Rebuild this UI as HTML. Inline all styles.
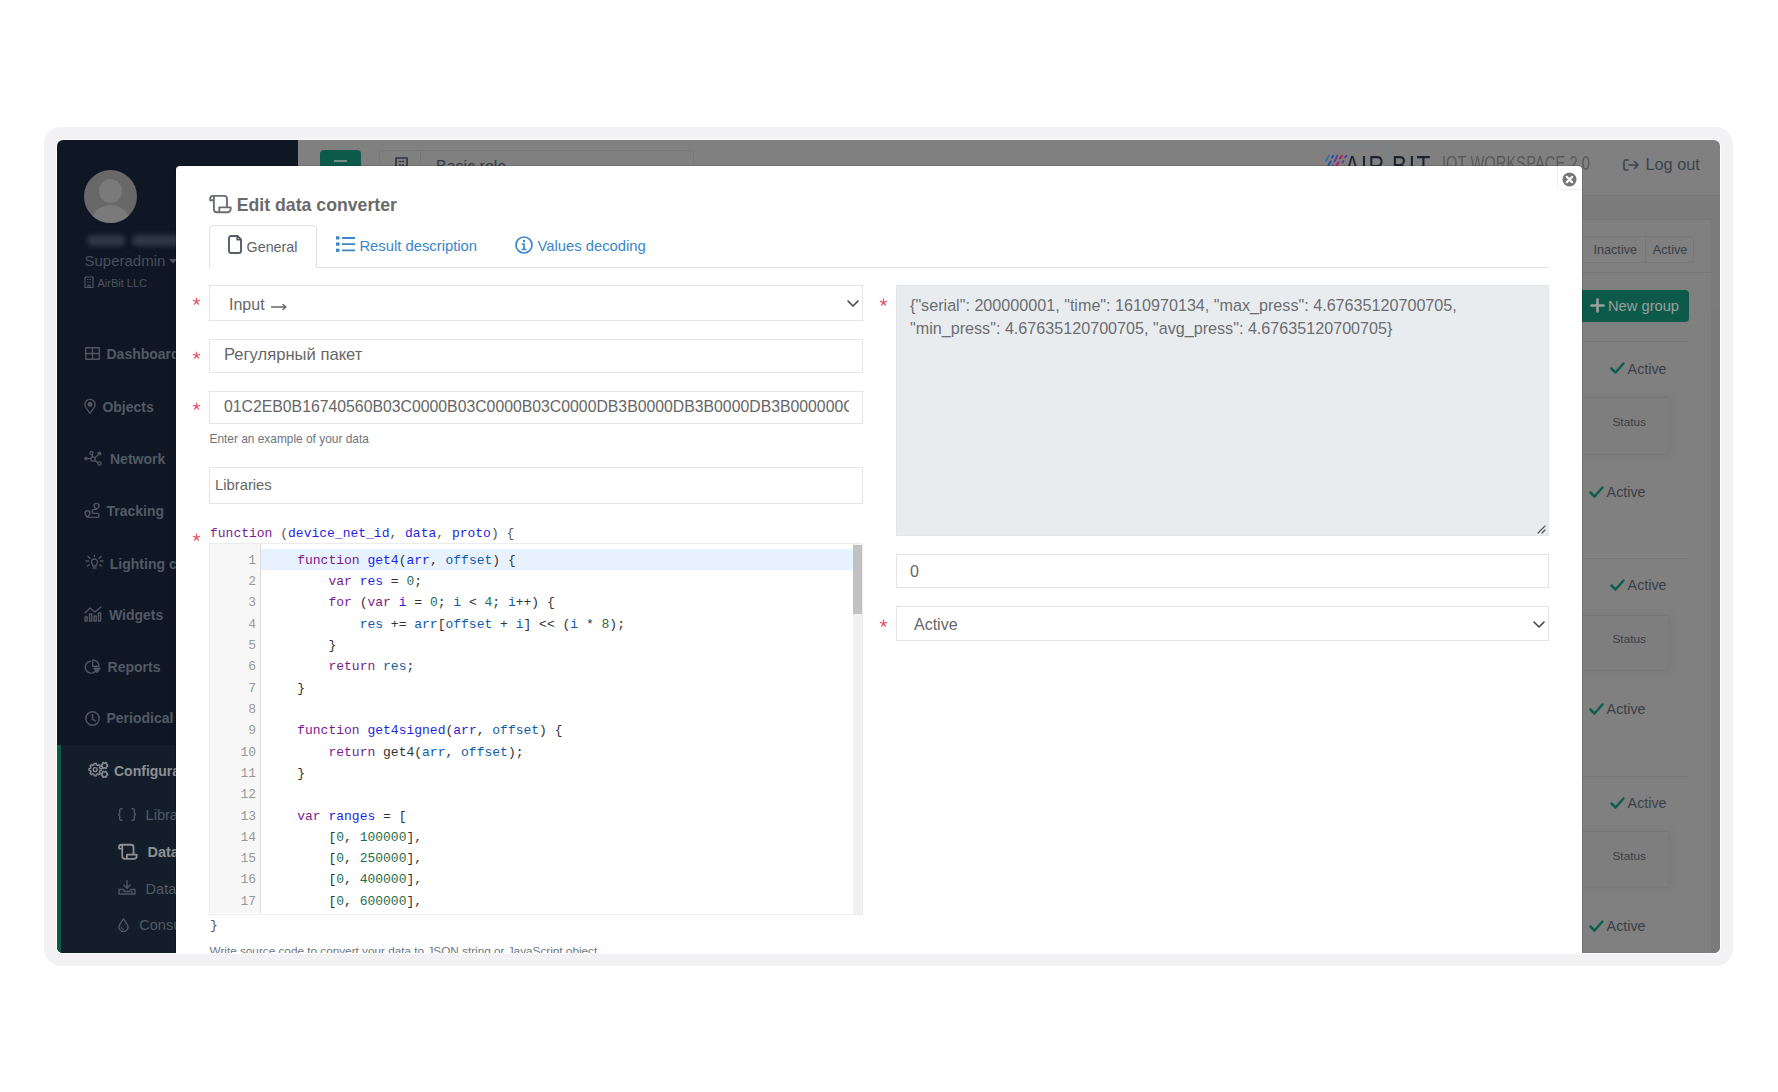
<!DOCTYPE html>
<html><head><meta charset="utf-8"><style>
*{box-sizing:border-box;margin:0;padding:0}
html,body{width:1778px;height:1092px;overflow:hidden;background:#fff;font-family:'Liberation Sans',sans-serif}
.a{position:absolute}
.t{white-space:nowrap}
#screen{position:absolute;left:57px;top:140px;width:1663px;height:813px;border-radius:6px;overflow:hidden}
#screen>.a{margin-left:-57px;margin-top:-140px}
.kw{color:#7a1a8f}.df{color:#1f1fe0}.v2{color:#1259a8}.nm{color:#1f6e4e}
.cl{height:21.32px}
</style></head><body>
<div class="a" style="left:44px;top:127px;width:1689px;height:839px;background:#f2f2f4;border-radius:17px"></div>
<div class="a" style="left:56px;top:139px;width:1665px;height:815px;background:#fdfdfd;border-radius:7px"></div>
<div id="screen">
<div class="a" style="left:57px;top:140px;width:241px;height:813px;background:#0f1724"></div>
<div class="a" style="left:298px;top:140px;width:1422px;height:55px;background:#808080"></div>
<div class="a" style="left:298px;top:195px;width:1422px;height:1px;background:#767676"></div>
<div class="a" style="left:298px;top:196px;width:1422px;height:757px;background:#7b7b7b"></div>
<div class="a" style="left:298px;top:219px;width:1413px;height:734px;background:#808080;border-top:1px solid #787878"></div>
<div class="a" style="left:298px;top:272px;width:1413px;height:1px;background:#767676"></div>
<div class="a" style="left:320px;top:150px;width:41px;height:42px;background:#0e5a4a;border-radius:4px"></div>
<div class="a" style="left:334px;top:160px;width:13px;height:2px;background:#6f8f87"></div>
<div class="a" style="left:379px;top:150px;width:315px;height:40px;border:1px solid #767676;border-radius:4px"></div>
<div class="a" style="left:420px;top:151px;width:1px;height:38px;background:#767676"></div>
<svg class="a" style="left:394.5px;top:156.5px;overflow:visible" width="13" height="17" viewBox="0 0 13 17" fill="none" stroke="#2f3540" stroke-width="1.7" stroke-linecap="round" stroke-linejoin="round"><rect x="1" y="1" width="11" height="15"/><path d="M4.5 4.5h1M7.5 4.5h1M4.5 8h1M7.5 8h1M4.5 11.5h1M7.5 11.5h1"/></svg>
<div class="a t " style="left:436px;top:159.45px;font-size:16px;line-height:16px;color:#333a44;font-weight:normal;font-family:'Liberation Sans',sans-serif;">Basic role</div>
<div class="a" style="left:1325px;top:146px;width:64px;height:30px;border:1px solid #75828b;border-bottom:none"></div>
<svg class="a" style="left:1320px;top:145px;overflow:visible" width="30" height="22" viewBox="0 0 30 22" fill="none" stroke="#3b55a8" stroke-width="1.9" stroke-linecap="round" stroke-linejoin="round"><path d="M8.6 10.8L5.9 16.2" stroke="#356fa8"/><path d="M13.1 10.8L11.9 12.6" stroke="#1f4fa0"/><path d="M10.6 16.4L8.3 20.3" stroke="#1f4fa0"/><path d="M17.3 10.8L14.4 16.7" stroke="#5a3aa8"/><path d="M13 20.3L12.8 20.5" stroke="#5a3aa8"/><path d="M22 10.8L19.8 13.5" stroke="#b02050"/><path d="M18.5 17.3L16.4 20.5" stroke="#b02050"/><path d="M26.4 10.8L25 12.4" stroke="#5a3aa8"/><path d="M23.6 16L22.3 17.6" stroke="#5a3aa8"/></svg>
<div class="a t " style="left:1344.5px;top:152.45px;font-size:29px;line-height:29px;color:#1d2333;font-weight:normal;font-family:'Liberation Sans',sans-serif;letter-spacing:2px;transform:scaleX(.75);transform-origin:left top">AIR</div>
<div class="a t " style="left:1392px;top:152.45px;font-size:29px;line-height:29px;color:#1d2333;font-weight:normal;font-family:'Liberation Sans',sans-serif;letter-spacing:2px;transform:scaleX(.78);transform-origin:left top">BIT</div>
<div class="a t " style="left:1442px;top:153.14px;font-size:20.5px;line-height:20.5px;color:#595959;font-weight:normal;font-family:'Liberation Sans',sans-serif;transform:scaleX(.72);transform-origin:left top">IOT WORKSPACE 2.0</div>
<svg class="a" style="left:1623px;top:159px;overflow:visible" width="16" height="12" viewBox="0 0 16 12" fill="none" stroke="#3d4350" stroke-width="1.6" stroke-linecap="round" stroke-linejoin="round"><path d="M5 1H2.5a1.5 1.5 0 0 0-1.5 1.5v7A1.5 1.5 0 0 0 2.5 11H5M6 6h9M11.5 2.5L15 6l-3.5 3.5"/></svg>
<div class="a t " style="left:1645.5px;top:156.30px;font-size:16.3px;line-height:16.3px;color:#3d4350;font-weight:normal;font-family:'Liberation Sans',sans-serif;">Log out</div>
<div class="a" style="left:1560px;top:236px;width:134px;height:27px;border:1px solid #777;border-radius:4px"></div>
<div class="a" style="left:1645px;top:237px;width:1px;height:26px;background:#777"></div>
<div class="a t " style="left:1593.4px;top:243.75px;font-size:12.7px;line-height:12.7px;color:#3b3f48;font-weight:normal;font-family:'Liberation Sans',sans-serif;">Inactive</div>
<div class="a t " style="left:1652.8px;top:243.75px;font-size:12.7px;line-height:12.7px;color:#3b3f48;font-weight:normal;font-family:'Liberation Sans',sans-serif;">Active</div>
<div class="a" style="left:1560px;top:290px;width:129px;height:32px;background:#0e5a4a;border-radius:4px"></div>
<svg class="a" style="left:1591px;top:299px;overflow:visible" width="13" height="13" viewBox="0 0 13 13" fill="none" stroke="#9aa09e" stroke-width="2.6" stroke-linecap="round" stroke-linejoin="round"><path d="M6.5 0.5v12M0.5 6.5h12"/></svg>
<div class="a t " style="left:1608px;top:299.05px;font-size:14.7px;line-height:14.7px;color:#9aa09e;font-weight:normal;font-family:'Liberation Sans',sans-serif;">New group</div>
<div class="a" style="left:1560px;top:341px;width:129px;height:1px;background:#767676"></div>
<div class="a" style="left:1560px;top:557.5px;width:129px;height:1px;background:#767676"></div>
<div class="a" style="left:1560px;top:775.5px;width:129px;height:1px;background:#767676"></div>
<div class="a" style="left:1560px;top:397px;width:108px;height:58px;background:#7e7e7e;border-top:1px solid #767676;border-bottom:1px solid #767676;box-shadow:4px 0 8px rgba(0,0,0,.06)"></div>
<div class="a" style="left:1560px;top:615px;width:108px;height:56px;background:#7e7e7e;border-top:1px solid #767676;border-bottom:1px solid #767676;box-shadow:4px 0 8px rgba(0,0,0,.06)"></div>
<div class="a" style="left:1560px;top:831px;width:108px;height:57px;background:#7e7e7e;border-top:1px solid #767676;border-bottom:1px solid #767676;box-shadow:4px 0 8px rgba(0,0,0,.06)"></div>
<svg class="a" style="left:1609.6px;top:362.4px;overflow:visible" width="15" height="12" viewBox="0 0 15 12" fill="none" stroke="#0d5e4a" stroke-width="2.5" stroke-linecap="round" stroke-linejoin="round"><path d="M1.5 6.5L5.5 10.5L13.5 1.5"/></svg>
<div class="a t " style="left:1627.6px;top:361.59px;font-size:14.3px;line-height:14.3px;color:#3b3f48;font-weight:normal;font-family:'Liberation Sans',sans-serif;">Active</div>
<svg class="a" style="left:1588.6px;top:486.2px;overflow:visible" width="15" height="12" viewBox="0 0 15 12" fill="none" stroke="#0d5e4a" stroke-width="2.5" stroke-linecap="round" stroke-linejoin="round"><path d="M1.5 6.5L5.5 10.5L13.5 1.5"/></svg>
<div class="a t " style="left:1606.6px;top:485.39px;font-size:14.3px;line-height:14.3px;color:#3b3f48;font-weight:normal;font-family:'Liberation Sans',sans-serif;">Active</div>
<svg class="a" style="left:1609.6px;top:579.3px;overflow:visible" width="15" height="12" viewBox="0 0 15 12" fill="none" stroke="#0d5e4a" stroke-width="2.5" stroke-linecap="round" stroke-linejoin="round"><path d="M1.5 6.5L5.5 10.5L13.5 1.5"/></svg>
<div class="a t " style="left:1627.6px;top:578.49px;font-size:14.3px;line-height:14.3px;color:#3b3f48;font-weight:normal;font-family:'Liberation Sans',sans-serif;">Active</div>
<svg class="a" style="left:1588.6px;top:703px;overflow:visible" width="15" height="12" viewBox="0 0 15 12" fill="none" stroke="#0d5e4a" stroke-width="2.5" stroke-linecap="round" stroke-linejoin="round"><path d="M1.5 6.5L5.5 10.5L13.5 1.5"/></svg>
<div class="a t " style="left:1606.6px;top:702.19px;font-size:14.3px;line-height:14.3px;color:#3b3f48;font-weight:normal;font-family:'Liberation Sans',sans-serif;">Active</div>
<svg class="a" style="left:1609.6px;top:796.8px;overflow:visible" width="15" height="12" viewBox="0 0 15 12" fill="none" stroke="#0d5e4a" stroke-width="2.5" stroke-linecap="round" stroke-linejoin="round"><path d="M1.5 6.5L5.5 10.5L13.5 1.5"/></svg>
<div class="a t " style="left:1627.6px;top:795.99px;font-size:14.3px;line-height:14.3px;color:#3b3f48;font-weight:normal;font-family:'Liberation Sans',sans-serif;">Active</div>
<svg class="a" style="left:1588.6px;top:920px;overflow:visible" width="15" height="12" viewBox="0 0 15 12" fill="none" stroke="#0d5e4a" stroke-width="2.5" stroke-linecap="round" stroke-linejoin="round"><path d="M1.5 6.5L5.5 10.5L13.5 1.5"/></svg>
<div class="a t " style="left:1606.6px;top:919.19px;font-size:14.3px;line-height:14.3px;color:#3b3f48;font-weight:normal;font-family:'Liberation Sans',sans-serif;">Active</div>
<div class="a t " style="left:1612.5px;top:416.91px;font-size:11.8px;line-height:11.8px;color:#3b3f48;font-weight:normal;font-family:'Liberation Sans',sans-serif;">Status</div>
<div class="a t " style="left:1612.5px;top:633.81px;font-size:11.8px;line-height:11.8px;color:#3b3f48;font-weight:normal;font-family:'Liberation Sans',sans-serif;">Status</div>
<div class="a t " style="left:1612.5px;top:850.81px;font-size:11.8px;line-height:11.8px;color:#3b3f48;font-weight:normal;font-family:'Liberation Sans',sans-serif;">Status</div>
<div class="a" style="left:1711px;top:310px;width:9px;height:643px;background:#7a7a7a"></div>
<div class="a" style="left:84px;top:170px;width:53px;height:53px;border-radius:50%;background:#686868;overflow:hidden"><div class="a" style="left:15px;top:9px;width:23px;height:24px;border-radius:50%;background:#7a7a7a"></div><div class="a" style="left:8px;top:35px;width:37px;height:30px;border-radius:50% 50% 0 0;background:#7a7a7a"></div></div>
<div class="a" style="left:87px;top:235px;width:38px;height:11px;background:#2f3845;filter:blur(2.5px);border-radius:5px"></div>
<div class="a" style="left:132px;top:235px;width:50px;height:11px;background:#2f3845;filter:blur(2.5px);border-radius:5px"></div>
<div class="a t " style="left:84.5px;top:253.30px;font-size:15px;line-height:15px;color:#464f5c;font-weight:normal;font-family:'Liberation Sans',sans-serif;">Superadmin</div>
<svg class="a" style="left:169px;top:259px;overflow:visible" width="8" height="5" viewBox="0 0 8 5" fill="none" stroke="#4d5562" stroke-width="2" stroke-linecap="round" stroke-linejoin="round"><path d="M0 0h8L4 4.5z" fill="#4d5562" stroke="none"/></svg>
<svg class="a" style="left:84px;top:276px;overflow:visible" width="10" height="12" viewBox="0 0 10 12" fill="none" stroke="#4d5562" stroke-width="1.2" stroke-linecap="round" stroke-linejoin="round"><rect x="1" y="1" width="8" height="10.5"/><path d="M3.5 3.5h.5M6 3.5h.5M3.5 6h.5M6 6h.5M4 11.5v-2.5h2v2.5"/></svg>
<div class="a t " style="left:97.5px;top:277.69px;font-size:11px;line-height:11px;color:#4d5562;font-weight:normal;font-family:'Liberation Sans',sans-serif;">AirBit LLC</div>
<svg class="a" style="left:84.6px;top:347.3px;overflow:visible" width="15" height="13" viewBox="0 0 15 13" fill="none" stroke="#4f5660" stroke-width="1.4" stroke-linecap="round" stroke-linejoin="round"><rect x="0.7" y="0.7" width="13.6" height="11.6"/><path d="M7.5 0.7v11.6M0.7 6.5h13.6"/></svg>
<div class="a t " style="left:106.5px;top:347.45px;font-size:14px;line-height:14px;color:#525a64;font-weight:bold;font-family:'Liberation Sans',sans-serif;">Dashboard</div>
<svg class="a" style="left:84.2px;top:399.3px;overflow:visible" width="12" height="15" viewBox="0 0 12 15" fill="none" stroke="#4f5660" stroke-width="1.4" stroke-linecap="round" stroke-linejoin="round"><path d="M6 14.3C3 10.5 0.8 7.8 0.8 5.6A5.2 5.2 0 0 1 11.2 5.6C11.2 7.8 9 10.5 6 14.3z"/><circle cx="6" cy="5.3" r="1.8" fill="#4f5660"/></svg>
<div class="a t " style="left:102.4px;top:399.65px;font-size:14px;line-height:14px;color:#525a64;font-weight:bold;font-family:'Liberation Sans',sans-serif;">Objects</div>
<svg class="a" style="left:84px;top:451px;overflow:visible" width="19" height="15" viewBox="0 0 19 15" fill="none" stroke="#4f5660" stroke-width="1.3" stroke-linecap="round" stroke-linejoin="round"><circle cx="2" cy="7.5" r="1.2" fill="#4f5660"/><circle cx="7.5" cy="2" r="1.6"/><circle cx="9" cy="8" r="2.2"/><circle cx="15.5" cy="2.5" r="1.4" fill="#4f5660"/><circle cx="15.5" cy="12.5" r="1.6"/><path d="M3 7.6h3.8M8 3.5l.6 2.3M11 6.8l3.3-3.2M10.8 9.6l3.5 2"/></svg>
<div class="a t " style="left:110px;top:451.85px;font-size:14px;line-height:14px;color:#525a64;font-weight:bold;font-family:'Liberation Sans',sans-serif;">Network</div>
<svg class="a" style="left:82px;top:498px;overflow:visible" width="20" height="22" viewBox="0 0 20 22" fill="none" stroke="#4f5660" stroke-width="1.4" stroke-linecap="round" stroke-linejoin="round"><path d="M14.5 11.3C13.2 10 12 9 12 7.9A2.5 2.5 0 0 1 17 7.9C17 9 15.8 10 14.5 11.3z"/><path d="M5.5 19.3C4.2 17.6 3 16.5 3 15.2A2.5 2.5 0 0 1 8 15.2C8 16.5 6.8 17.6 5.5 19.3z"/><path d="M14 11.4H12.3A2 2 0 0 0 12.3 15.4H15A2 2 0 0 1 15 19.4H5.5"/></svg>
<div class="a t " style="left:106.5px;top:504.15px;font-size:14px;line-height:14px;color:#525a64;font-weight:bold;font-family:'Liberation Sans',sans-serif;">Tracking</div>
<svg class="a" style="left:84.5px;top:554.6px;overflow:visible" width="19" height="15" viewBox="0 0 19 15" fill="none" stroke="#4f5660" stroke-width="1.4" stroke-linecap="round" stroke-linejoin="round"><path d="M6.5 7A3 3 0 0 1 12.5 7C12.5 8.6 11 9.5 11 11H8C8 9.5 6.5 8.6 6.5 7zM8 13h3M1 6h2.5M15.5 6H18M3 1.5l1.8 1.8M16 1.5l-1.8 1.8M2.5 11l1.8-1.3M16.5 11l-1.8-1.3M9.5 0.5v1"/></svg>
<div class="a t " style="left:109.8px;top:556.55px;font-size:14px;line-height:14px;color:#525a64;font-weight:bold;font-family:'Liberation Sans',sans-serif;">Lighting control</div>
<svg class="a" style="left:84px;top:605.9px;overflow:visible" width="19" height="16" viewBox="0 0 19 16" fill="none" stroke="#4f5660" stroke-width="1.4" stroke-linecap="round" stroke-linejoin="round"><path d="M1 7L6 2L11 6L17 1"/><rect x="1" y="11" width="2.2" height="4"/><rect x="5.5" y="8" width="2.2" height="7"/><rect x="10" y="10" width="2.2" height="5"/><rect x="14.5" y="7" width="2.2" height="8"/></svg>
<div class="a t " style="left:109px;top:607.75px;font-size:14px;line-height:14px;color:#525a64;font-weight:bold;font-family:'Liberation Sans',sans-serif;">Widgets</div>
<svg class="a" style="left:84px;top:659px;overflow:visible" width="17" height="15" viewBox="0 0 17 15" fill="none" stroke="#4f5660" stroke-width="1.4" stroke-linecap="round" stroke-linejoin="round"><path d="M6.5 2.2A6 6 0 1 0 12.8 10.5"/><path d="M8.7 1v6.3h6.2A6.2 6.2 0 0 0 8.7 1z"/><path d="M10 9.3h6l-3 4z" fill="#4f5660"/></svg>
<div class="a t " style="left:107.6px;top:659.95px;font-size:14px;line-height:14px;color:#525a64;font-weight:bold;font-family:'Liberation Sans',sans-serif;">Reports</div>
<svg class="a" style="left:84.5px;top:711px;overflow:visible" width="15" height="15" viewBox="0 0 15 15" fill="none" stroke="#4f5660" stroke-width="1.5" stroke-linecap="round" stroke-linejoin="round"><circle cx="7.5" cy="7.5" r="6.7"/><path d="M7.5 3.5v4.3l2.8 2.2"/></svg>
<div class="a t " style="left:106.5px;top:711.15px;font-size:14px;line-height:14px;color:#525a64;font-weight:bold;font-family:'Liberation Sans',sans-serif;">Periodical</div>
<div class="a" style="left:57px;top:745px;width:241px;height:208px;background:#141e2b"></div>
<div class="a" style="left:57px;top:745px;width:4px;height:208px;background:#0d5848"></div>
<svg class="a" style="left:84px;top:756px;overflow:visible" width="26" height="24" viewBox="0 0 26 24" fill="none" stroke="#8a8c90" stroke-width="1.3" stroke-linecap="round" stroke-linejoin="round"><path d="M17.40 12.49 L17.40 14.71 L15.87 14.72 L15.29 16.11 L16.37 17.20 L14.80 18.77 L13.71 17.69 L12.32 18.27 L12.31 19.80 L10.09 19.80 L10.08 18.27 L8.69 17.69 L7.60 18.77 L6.03 17.20 L7.11 16.11 L6.53 14.72 L5.00 14.71 L5.00 12.49 L6.53 12.48 L7.11 11.09 L6.03 10.00 L7.60 8.43 L8.69 9.51 L10.08 8.93 L10.09 7.40 L12.31 7.40 L12.32 8.93 L13.71 9.51 L14.80 8.43 L16.37 10.00 L15.29 11.09 L15.87 12.48z"/><circle cx="11.2" cy="13.6" r="2"/><path d="M23.61 8.75 L23.61 10.25 L22.69 10.21 L22.21 11.04 L22.70 11.82 L21.41 12.57 L20.98 11.75 L20.02 11.75 L19.59 12.57 L18.30 11.82 L18.79 11.04 L18.31 10.21 L17.39 10.25 L17.39 8.75 L18.31 8.79 L18.79 7.96 L18.30 7.18 L19.59 6.43 L20.02 7.25 L20.98 7.25 L21.41 6.43 L22.70 7.18 L22.21 7.96 L22.69 8.79z"/><path d="M23.61 17.55 L23.61 19.05 L22.69 19.01 L22.21 19.84 L22.70 20.62 L21.41 21.37 L20.98 20.55 L20.02 20.55 L19.59 21.37 L18.30 20.62 L18.79 19.84 L18.31 19.01 L17.39 19.05 L17.39 17.55 L18.31 17.59 L18.79 16.76 L18.30 15.98 L19.59 15.23 L20.02 16.05 L20.98 16.05 L21.41 15.23 L22.70 15.98 L22.21 16.76 L22.69 17.59z"/></svg>
<div class="a t " style="left:114px;top:763.75px;font-size:14px;line-height:14px;color:#8d9094;font-weight:bold;font-family:'Liberation Sans',sans-serif;">Configuration</div>
<svg class="a" style="left:118.3px;top:808.3px;overflow:visible" width="18" height="13" viewBox="0 0 18 13" fill="none" stroke="#4f5660" stroke-width="1.4" stroke-linecap="round" stroke-linejoin="round"><path d="M4 0.8H3A1.3 1.3 0 0 0 1.7 2.1V5L0.6 6.5L1.7 8V10.9A1.3 1.3 0 0 0 3 12.2H4M14 0.8H15A1.3 1.3 0 0 1 16.3 2.1V5L17.4 6.5L16.3 8V10.9A1.3 1.3 0 0 1 15 12.2H14"/></svg>
<div class="a t " style="left:145.6px;top:807.72px;font-size:14.5px;line-height:14.5px;color:#525a64;font-weight:normal;font-family:'Liberation Sans',sans-serif;">Libraries</div>
<svg class="a" style="left:118.3px;top:843.5px;overflow:visible" width="19" height="15.5" viewBox="0 0 22 18" fill="none" stroke="#8d9094" stroke-width="2.1" stroke-linecap="round" stroke-linejoin="round"><path d="M4.9 5.3H1.2V3.6A2.7 2.7 0 0 1 3.9 0.9H15A3 3 0 0 1 18 3.9V12.4M4.9 1.5V14.2A3 3 0 0 0 7.9 17.2H18.5A3.2 3.2 0 0 0 21.7 14V12.4H10.3V17"/></svg>
<div class="a t " style="left:147.5px;top:844.92px;font-size:14.5px;line-height:14.5px;color:#8d9094;font-weight:bold;font-family:'Liberation Sans',sans-serif;">Data converters</div>
<svg class="a" style="left:118.3px;top:880.4px;overflow:visible" width="18" height="15" viewBox="0 0 18 15" fill="none" stroke="#4f5660" stroke-width="1.4" stroke-linecap="round" stroke-linejoin="round"><path d="M1 9.5V14H17V9.5H12.5L11.5 11.5H6.5L5.5 9.5z"/><path d="M9 0.8V8M5.8 5l3.2 3.2L12.2 5"/><circle cx="14" cy="12" r=".4" fill="#4f5660"/></svg>
<div class="a t " style="left:145.6px;top:882.02px;font-size:14.5px;line-height:14.5px;color:#525a64;font-weight:normal;font-family:'Liberation Sans',sans-serif;">Data</div>
<svg class="a" style="left:118.3px;top:917.8px;overflow:visible" width="11" height="14" viewBox="0 0 11 14" fill="none" stroke="#4f5660" stroke-width="1.4" stroke-linecap="round" stroke-linejoin="round"><path d="M5.5 0.8C3.5 4 1 6.5 1 9A4.5 4.5 0 0 0 10 9C10 6.5 7.5 4 5.5 0.8z"/><path d="M3.3 9.2A2.2 2.2 0 0 0 5.5 11.4" stroke-width="1"/></svg>
<div class="a t " style="left:139.3px;top:917.72px;font-size:14.5px;line-height:14.5px;color:#525a64;font-weight:normal;font-family:'Liberation Sans',sans-serif;">Consumption</div>
<div class="a" style="left:176px;top:166px;width:1406px;height:800px;background:#fff;border-radius:4px 4px 0 0;box-shadow:0 0 0 1px rgba(0,0,0,.12)"></div>
<div class="a" style="left:1557px;top:166px;width:25px;height:24px;border-left:1px solid #eceef0;border-bottom:1px solid #eceef0;border-radius:0 0 0 5px"></div>
<svg class="a" style="left:1562px;top:172px" width="15" height="15" viewBox="0 0 15 15"><circle cx="7.5" cy="7.5" r="7" fill="#777"/><path d="M4.8 4.8l5.4 5.4M10.2 4.8l-5.4 5.4" stroke="#fff" stroke-width="2.2" stroke-linecap="round"/></svg>
<svg class="a" style="left:209px;top:195px;overflow:visible" width="22" height="18" viewBox="0 0 22 18" fill="none" stroke="#6b6e72" stroke-width="1.9" stroke-linecap="round" stroke-linejoin="round"><path d="M4.9 5.3H1.2V3.6A2.7 2.7 0 0 1 3.9 0.9H15A3 3 0 0 1 18 3.9V12.4M4.9 1.5V14.2A3 3 0 0 0 7.9 17.2H18.5A3.2 3.2 0 0 0 21.7 14V12.4H10.3V17"/></svg>
<div class="a t " style="left:236.7px;top:197.21px;font-size:17.7px;line-height:17.7px;color:#6a6a6a;font-weight:bold;font-family:'Liberation Sans',sans-serif;">Edit data converter</div>
<div class="a" style="left:209px;top:267px;width:1340px;height:1px;background:#dee2e6"></div>
<div class="a" style="left:209px;top:225px;width:108px;height:43px;background:#fff;border:1px solid #dee2e6;border-bottom:none;border-radius:4px 4px 0 0"></div>
<svg class="a" style="left:228px;top:235px;overflow:visible" width="14" height="19" viewBox="0 0 14 19" fill="none" stroke="#555c63" stroke-width="1.9" stroke-linecap="round" stroke-linejoin="round"><path d="M1 3a2 2 0 0 1 2-2h6.5L13 4.5V16a2 2 0 0 1-2 2H3a2 2 0 0 1-2-2z"/><path d="M9.2 1.2v3.6h3.6" stroke-width="1.6"/></svg>
<div class="a t " style="left:246.6px;top:239.89px;font-size:14.3px;line-height:14.3px;color:#5d6166;font-weight:normal;font-family:'Liberation Sans',sans-serif;">General</div>
<svg class="a" style="left:335.5px;top:236px;overflow:visible" width="20" height="17" viewBox="0 0 20 17" fill="none" stroke="#3a86c8" stroke-width="1.8" stroke-linecap="round" stroke-linejoin="round"><rect x="0" y="0.3" width="3.5" height="3.2" fill="#3a86c8" stroke="none"/><rect x="0" y="6.5" width="3.5" height="3.2" fill="#3a86c8" stroke="none"/><rect x="0" y="12.7" width="3.5" height="3.2" fill="#3a86c8" stroke="none"/><path d="M6 2H19M6 8.2H19M6 14.3H19" stroke-linecap="butt"/></svg>
<div class="a t " style="left:359.4px;top:239.47px;font-size:14.8px;line-height:14.8px;color:#3a86c8;font-weight:normal;font-family:'Liberation Sans',sans-serif;">Result description</div>
<svg class="a" style="left:515px;top:236px;overflow:visible" width="18" height="18" viewBox="0 0 18 18" fill="none" stroke="#3a86c8" stroke-width="1.7" stroke-linecap="round" stroke-linejoin="round"><circle cx="9" cy="9" r="8"/><circle cx="9" cy="5" r="1.2" fill="#3a86c8" stroke="none"/><path d="M9 8v5.5M7.5 8H9M7.3 13.5h3.4"/></svg>
<div class="a t " style="left:537.5px;top:239.47px;font-size:14.8px;line-height:14.8px;color:#3a86c8;font-weight:normal;font-family:'Liberation Sans',sans-serif;">Values decoding</div>
<div class="a" style="left:209px;top:285px;width:654px;height:36px;background:#fff;border:1px solid #e2e4e6"></div>
<svg class="a" style="left:193.2px;top:298.0px;overflow:visible" width="7" height="7" viewBox="0 0 7 7" fill="none" stroke="#e9566b" stroke-width="1.3" stroke-linecap="round" stroke-linejoin="round"><path d="M3.5 3.5L3.50 0.20M3.5 3.5L6.64 2.48M3.5 3.5L5.44 6.17M3.5 3.5L1.56 6.17M3.5 3.5L0.36 2.48"/></svg>
<div class="a t " style="left:229px;top:296.95px;font-size:16px;line-height:16px;color:#666;font-weight:normal;font-family:'Liberation Sans',sans-serif;">Input</div>
<svg class="a" style="left:271px;top:303.5px;overflow:visible" width="16" height="6" viewBox="0 0 16 6" fill="none" stroke="#666" stroke-width="1.3" stroke-linecap="round" stroke-linejoin="round"><path d="M0.5 3H15M12 0.5L15 3L12 5.5"/></svg>
<svg class="a" style="left:847px;top:300px;overflow:visible" width="11" height="6" viewBox="0 0 11 6" fill="none" stroke="#444" stroke-width="1.6" stroke-linecap="round" stroke-linejoin="round"><path d="M1 1l5 5 5-5"/></svg>
<div class="a" style="left:209px;top:339px;width:654px;height:34px;background:#fff;border:1px solid #e2e4e6"></div>
<svg class="a" style="left:193.2px;top:351.5px;overflow:visible" width="7" height="7" viewBox="0 0 7 7" fill="none" stroke="#e9566b" stroke-width="1.3" stroke-linecap="round" stroke-linejoin="round"><path d="M3.5 3.5L3.50 0.20M3.5 3.5L6.64 2.48M3.5 3.5L5.44 6.17M3.5 3.5L1.56 6.17M3.5 3.5L0.36 2.48"/></svg>
<div class="a t " style="left:224px;top:347.44px;font-size:16.6px;line-height:16.6px;color:#666;font-weight:normal;font-family:'Liberation Sans',sans-serif;">Регулярный пакет</div>
<div class="a" style="left:209px;top:391px;width:654px;height:33px;background:#fff;border:1px solid #e2e4e6"></div>
<svg class="a" style="left:193.2px;top:403.0px;overflow:visible" width="7" height="7" viewBox="0 0 7 7" fill="none" stroke="#e9566b" stroke-width="1.3" stroke-linecap="round" stroke-linejoin="round"><path d="M3.5 3.5L3.50 0.20M3.5 3.5L6.64 2.48M3.5 3.5L5.44 6.17M3.5 3.5L1.56 6.17M3.5 3.5L0.36 2.48"/></svg>
<div class="a" style="left:224px;top:395px;width:625px;height:26px;overflow:hidden">
<div class="a t " style="left:0px;top:3.62px;font-size:15.8px;line-height:15.8px;color:#666;font-weight:normal;font-family:'Liberation Sans',sans-serif;">01C2EB0B16740560B03C0000B03C0000B03C0000DB3B0000DB3B0000DB3B000000C</div>
</div>
<div class="a t " style="left:209.5px;top:433.62px;font-size:11.9px;line-height:11.9px;color:#6c757d;font-weight:normal;font-family:'Liberation Sans',sans-serif;">Enter an example of your data</div>
<div class="a" style="left:209px;top:467px;width:654px;height:37px;background:#fff;border:1px solid #e2e4e6"></div>
<div class="a t " style="left:215px;top:478.47px;font-size:14.8px;line-height:14.8px;color:#666;font-weight:normal;font-family:'Liberation Sans',sans-serif;">Libraries</div>
<svg class="a" style="left:193.2px;top:534.2px;overflow:visible" width="7" height="7" viewBox="0 0 7 7" fill="none" stroke="#e9566b" stroke-width="1.3" stroke-linecap="round" stroke-linejoin="round"><path d="M3.5 3.5L3.50 0.20M3.5 3.5L6.64 2.48M3.5 3.5L5.44 6.17M3.5 3.5L1.56 6.17M3.5 3.5L0.36 2.48"/></svg>
<div class="a t " style="left:210px;top:526.84px;font-size:13px;line-height:13px;color:#555;font-weight:normal;font-family:'Liberation Mono',monospace;"><span class="kw">function</span> (<span class="df">device_net_id</span>, <span class="df">data</span>, <span class="df">proto</span>) {</div>
<div class="a" style="left:209px;top:543px;width:654px;height:372px;border:1px solid #ececec;background:#fff"></div>
<div class="a" style="left:210px;top:544px;width:51px;height:369px;background:#f7f7f7;border-right:1px solid #ddd"></div>
<div class="a" style="left:261px;top:549px;width:592px;height:21px;background:#e8f2ff"></div>
<div class="a" style="left:210px;top:549.78px;width:46px;text-align:right;font:13px/21.32px 'Liberation Mono',monospace;color:#999"><div style="height:21.32px">1</div><div style="height:21.32px">2</div><div style="height:21.32px">3</div><div style="height:21.32px">4</div><div style="height:21.32px">5</div><div style="height:21.32px">6</div><div style="height:21.32px">7</div><div style="height:21.32px">8</div><div style="height:21.32px">9</div><div style="height:21.32px">10</div><div style="height:21.32px">11</div><div style="height:21.32px">12</div><div style="height:21.32px">13</div><div style="height:21.32px">14</div><div style="height:21.32px">15</div><div style="height:21.32px">16</div><div style="height:21.32px">17</div></div>
<div class="a" style="left:261px;top:544px;width:592px;height:369px;overflow:hidden"><div style="position:absolute;left:5px;top:5.78px;font:13px/21.32px 'Liberation Mono',monospace;color:#333;white-space:pre"><div class="cl">    <span class="kw">function</span> <span class="df">get4</span>(<span class="df">arr</span>, <span class="v2">offset</span>) {</div><div class="cl">        <span class="kw">var</span> <span class="df">res</span> = <span class="nm">0</span>;</div><div class="cl">        <span class="kw">for</span> (<span class="kw">var</span> <span class="df">i</span> = <span class="nm">0</span>; <span class="v2">i</span> &lt; <span class="nm">4</span>; <span class="v2">i</span>++) {</div><div class="cl">            <span class="v2">res</span> += <span class="v2">arr</span>[<span class="v2">offset</span> + <span class="v2">i</span>] &lt;&lt; (<span class="v2">i</span> * <span class="nm">8</span>);</div><div class="cl">        }</div><div class="cl">        <span class="kw">return</span> <span class="v2">res</span>;</div><div class="cl">    }</div><div class="cl"></div><div class="cl">    <span class="kw">function</span> <span class="df">get4signed</span>(<span class="df">arr</span>, <span class="v2">offset</span>) {</div><div class="cl">        <span class="kw">return</span> get4(<span class="v2">arr</span>, <span class="v2">offset</span>);</div><div class="cl">    }</div><div class="cl"></div><div class="cl">    <span class="kw">var</span> <span class="df">ranges</span> = [</div><div class="cl">        [<span class="nm">0</span>, <span class="nm">100000</span>],</div><div class="cl">        [<span class="nm">0</span>, <span class="nm">250000</span>],</div><div class="cl">        [<span class="nm">0</span>, <span class="nm">400000</span>],</div><div class="cl">        [<span class="nm">0</span>, <span class="nm">600000</span>],</div></div></div>
<div class="a" style="left:853px;top:544px;width:9px;height:370px;background:#f1f1f1"></div>
<div class="a" style="left:853px;top:545px;width:9px;height:69px;background:#c1c1c1"></div>
<div class="a t " style="left:210px;top:919.04px;font-size:13px;line-height:13px;color:#555;font-weight:normal;font-family:'Liberation Mono',monospace;">}</div>
<div class="a t " style="left:209.5px;top:945.05px;font-size:11.75px;line-height:11.75px;color:#6c757d;font-weight:normal;font-family:'Liberation Sans',sans-serif;">Write source code to convert your data to JSON string or JavaScript object</div>
<svg class="a" style="left:879.5px;top:298.5px;overflow:visible" width="7" height="7" viewBox="0 0 7 7" fill="none" stroke="#e9566b" stroke-width="1.3" stroke-linecap="round" stroke-linejoin="round"><path d="M3.5 3.5L3.50 0.20M3.5 3.5L6.64 2.48M3.5 3.5L5.44 6.17M3.5 3.5L1.56 6.17M3.5 3.5L0.36 2.48"/></svg>
<div class="a" style="left:896px;top:285px;width:653px;height:251px;background:#e9ecef;border:1px solid #e3e6e9"></div>
<div class="a t " style="left:910px;top:297.13px;font-size:16.15px;line-height:16.15px;color:#6b6e71;font-weight:normal;font-family:'Liberation Sans',sans-serif;">{"serial": 200000001, "time": 1610970134, "max_press": 4.67635120700705,</div>
<div class="a t " style="left:910px;top:320.33px;font-size:16.15px;line-height:16.15px;color:#6b6e71;font-weight:normal;font-family:'Liberation Sans',sans-serif;">"min_press": 4.67635120700705, "avg_press": 4.67635120700705}</div>
<svg class="a" style="left:1537px;top:525px;overflow:visible" width="9" height="9" viewBox="0 0 9 9" fill="none" stroke="#555" stroke-width="1.2" stroke-linecap="round" stroke-linejoin="round"><path d="M8 1L1 8M8 5L5 8"/></svg>
<div class="a" style="left:896px;top:554px;width:653px;height:34px;background:#fff;border:1px solid #e2e4e6"></div>
<div class="a t " style="left:910px;top:564.45px;font-size:16px;line-height:16px;color:#666;font-weight:normal;font-family:'Liberation Sans',sans-serif;">0</div>
<div class="a" style="left:896px;top:606px;width:653px;height:35px;background:#fff;border:1px solid #e2e4e6"></div>
<svg class="a" style="left:879.5px;top:619.8px;overflow:visible" width="7" height="7" viewBox="0 0 7 7" fill="none" stroke="#e9566b" stroke-width="1.3" stroke-linecap="round" stroke-linejoin="round"><path d="M3.5 3.5L3.50 0.20M3.5 3.5L6.64 2.48M3.5 3.5L5.44 6.17M3.5 3.5L1.56 6.17M3.5 3.5L0.36 2.48"/></svg>
<div class="a t " style="left:914px;top:617.45px;font-size:16px;line-height:16px;color:#666;font-weight:normal;font-family:'Liberation Sans',sans-serif;">Active</div>
<svg class="a" style="left:1533px;top:621px;overflow:visible" width="11" height="6" viewBox="0 0 11 6" fill="none" stroke="#444" stroke-width="1.6" stroke-linecap="round" stroke-linejoin="round"><path d="M1 1l5 5 5-5"/></svg>
</div>
</body></html>
